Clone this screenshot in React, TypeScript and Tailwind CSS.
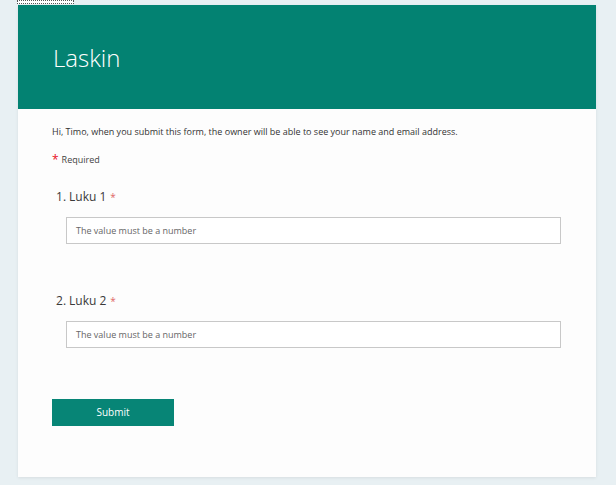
import React from "react";

const font = { fontFamily: '"Open Sans", "Noto Sans", Arial, sans-serif' };

function Question({ n, label }: { n: number; label: string }) {
  return (
    <div className="flex flex-col">
      <div className="ml-[4px] flex h-[18px] items-center text-[12px] text-[#3a3a3a]">
        <span>{n}.</span>
        <span className="ml-[3px]">{label}</span>
        <span className="ml-[4px] text-[10px] text-[#e06666]">*</span>
      </div>
      <div className="ml-[14px] mt-[11px] flex h-[27px] w-[495px] items-center border border-[#c8c8c8] bg-white px-[9px] text-[9px] text-[#666666]">
        The value must be a number
      </div>
    </div>
  );
}

export default function App() {
  return (
    <div className="relative h-[485px] w-[616px] overflow-hidden bg-[#e8f0f3]" style={font}>
      <div className="absolute left-[17px] top-0 h-[4px] w-[57px] border border-dotted border-[#555555] bg-white" />
      <div className="ml-[18px] mt-[5px] flex h-[472px] w-[578px] flex-col bg-[#fdfdfd] shadow-[0_1px_3px_rgba(0,0,0,0.08)]">
        <div className="flex h-[104px] items-start bg-[#038272] pl-[35px] pt-[37px]">
          <h1 className="text-[24px] font-light leading-[32px] text-white">Laskin</h1>
        </div>
        <div className="flex flex-col pl-[34px]">
          <p className="mt-[16px] h-[14px] text-[9px] leading-[14px] text-[#333333]">
            Hi, Timo, when you submit this form, the owner will be able to see your name and email address.
          </p>
          <p className="mt-[14px] flex h-[14px] items-center text-[9px] text-[#444444]">
            <span className="mr-[3px] text-[12px] leading-[12px] text-[#e81123]">*</span>
            Required
          </p>
          <div className="mt-[21px]">
            <Question n={1} label="Luku 1" />
          </div>
          <div className="mt-[48px]">
            <Question n={2} label="Luku 2" />
          </div>
          <button className="mt-[51px] flex h-[27px] w-[122px] items-center justify-center bg-[#078576] text-[10px] text-white">
            Submit
          </button>
        </div>
      </div>
    </div>
  );
}
